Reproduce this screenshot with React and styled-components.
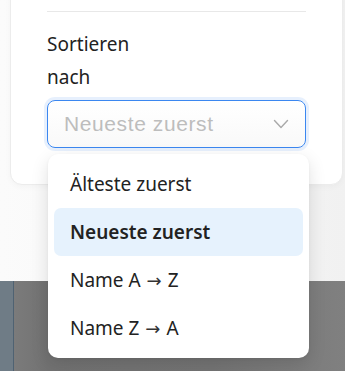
import React from "react";
import styled, { createGlobalStyle } from "styled-components";

const Global = createGlobalStyle`
  html, body { margin: 0; padding: 0; }
  body {
    width: 345px;
    height: 371px;
    overflow: hidden;
    font-family: "Noto Sans", "Segoe UI", sans-serif;
    color: #222;
  }
`;

const Page = styled.div`
  display: flex;
  flex-direction: column;
  width: 345px;
  height: 371px;
`;

const TopArea = styled.div`
  height: 281px;
  background: linear-gradient(to right, #fbfbfb 0%, #f6f6f6 60%, #f1f1f1 100%);
`;

const Card = styled.div`
  margin: -21px 2px 0 10px;
  padding: 31px 36px 36px;
  background: #fff;
  border: 1px solid #ececec;
  border-radius: 12px;
  box-shadow: 0 2px 6px rgba(0, 0, 0, 0.03);
  display: flex;
  flex-direction: column;
`;

const Divider = styled.hr`
  margin: 0;
  border: none;
  border-top: 1px solid #e8e8e8;
`;

const Label = styled.label`
  margin-top: 16px;
  font-size: 19px;
  line-height: 33px;
  width: 120px;
  color: #222;
`;

const Field = styled.div`
  position: relative;
  margin-top: 6px;
`;

const Select = styled.div`
  height: 46px;
  border: 1px solid #3b87f0;
  border-radius: 8px;
  box-shadow: 0 0 0 3px rgba(59, 135, 240, 0.12);
  background: linear-gradient(#fff, #f9f9f9);
  display: flex;
  align-items: center;
  justify-content: space-between;
  padding: 0 16px 0 16px;
`;

const Placeholder = styled.span`
  font-family: "Liberation Sans", Arial, sans-serif;
  font-size: 21px;
  letter-spacing: 0.6px;
  color: #bdbdbd;
`;

const Menu = styled.ul`
  position: absolute;
  top: 54px;
  left: 1px;
  width: 261px;
  box-sizing: border-box;
  margin: 0;
  padding: 6px;
  list-style: none;
  background: #fff;
  border-radius: 10px;
  box-shadow: 0 6px 18px rgba(0, 0, 0, 0.12), 0 1px 3px rgba(0, 0, 0, 0.05);
  z-index: 2;
`;

const Item = styled.li`
  height: 48px;
  display: flex;
  align-items: center;
  padding: 0 16px;
  border-radius: 7px;
  font-size: 19px;
  color: #222;
  white-space: pre;
  font-weight: ${(p) => (p.$active ? 600 : 400)};
  background: ${(p) => (p.$active ? "#e6f2fd" : "transparent")};
`;

const Arrow = styled.span`
  font-family: "DejaVu Sans", sans-serif;
  font-size: 18px;
  font-weight: 400;
  color: #333;
  margin: 0 1px;
`;

const Bottom = styled.div`
  flex: 1;
  display: flex;
`;

const SideStrip = styled.div`
  width: 13px;
  background: #6f7c86;
  border-right: 1px solid #4f6272;
`;

const DarkFill = styled.div`
  flex: 1;
  background: linear-gradient(to right, #7b7b7b 0%, #727272 10%, #747474 60%, #808080 100%);
`;

const Chevron = () => (
  <svg width="16" height="10" viewBox="0 0 16 10" fill="none" stroke="#a9a9a9" strokeWidth="1.4" strokeLinecap="round" strokeLinejoin="round">
    <path d="M1.5 1.5L8 8.5L14.5 1.5" />
  </svg>
);

const options = [
  { parts: ["Älteste zuerst"] },
  { parts: ["Neueste zuerst"], active: true },
  { parts: ["Name A ", " Z"] },
  { parts: ["Name Z ", " A"] },
];

export default function App() {
  return (
    <>
      <Global />
      <Page>
        <TopArea>
          <Card>
            <Divider />
            <Label>Sortieren nach</Label>
            <Field>
              <Select>
                <Placeholder>Neueste zuerst</Placeholder>
                <Chevron />
              </Select>
              <Menu>
                {options.map((o) => (
                  <Item key={o.parts.join("")} $active={o.active}>
                    {o.parts.length === 2 ? (
                      <>
                        {o.parts[0]}
                        <Arrow>→</Arrow>
                        {o.parts[1]}
                      </>
                    ) : (
                      o.parts[0]
                    )}
                  </Item>
                ))}
              </Menu>
            </Field>
          </Card>
        </TopArea>
        <Bottom>
          <SideStrip />
          <DarkFill />
        </Bottom>
      </Page>
    </>
  );
}
